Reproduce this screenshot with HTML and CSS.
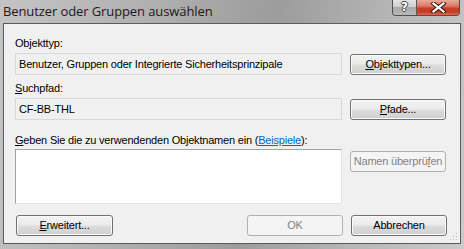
FILE: index.html
```html
<!DOCTYPE html>
<html lang="de">
<head>
<meta charset="utf-8">
<title>Benutzer oder Gruppen auswählen</title>
<link rel="stylesheet" href="styles.css">
</head>
<body>
<div class="window">
  <div class="titlebar">
    <span class="title">Benutzer oder Gruppen auswählen</span>
    <div class="caption-buttons">
      <div class="cap-btn help">?</div>
      <div class="cap-btn close">
        <svg width="17" height="11" viewBox="0 0 17 11">
          <path d="M3.5 1.5 L13.5 9.5 M13.5 1.5 L3.5 9.5" stroke="#3a1a14" stroke-width="4.2" stroke-linecap="square" fill="none"/>
          <path d="M3.5 1.5 L13.5 9.5 M13.5 1.5 L3.5 9.5" stroke="#ffffff" stroke-width="2.2" stroke-linecap="square" fill="none"/>
        </svg>
      </div>
    </div>
  </div>
  <div class="client">
    <div class="label l1">Objekttyp:</div>
    <div class="row r1">
      <div class="field">Benutzer, Gruppen oder Integrierte Sicherheitsprinzipale</div>
      <button class="btn"><u>O</u>bjekttypen...</button>
    </div>
    <div class="label l2"><u>S</u>uchpfad:</div>
    <div class="row r2">
      <div class="field">CF-BB-THL</div>
      <button class="btn"><u>P</u>fade...</button>
    </div>
    <div class="label l3"><u>G</u>eben Sie die zu verwendenden Objektnamen ein (<a class="link" href="#">Beispiele</a>):</div>
    <div class="row r3">
      <div class="names"></div>
      <button class="btn disabled">Namen überprü<u>f</u>en</button>
    </div>
    <div class="bottom">
      <button class="btn wide"><u>E</u>rweitert...</button>
      <div class="spacer"></div>
      <button class="btn disabled">OK</button>
      <button class="btn">Abbrechen</button>
    </div>
    <svg class="grip" width="9" height="9" viewBox="0 0 9 9">
      <rect x="7" y="1" width="1" height="1" fill="#b8b8b8"/>
      <rect x="4" y="4" width="1" height="1" fill="#b8b8b8"/>
      <rect x="7" y="4" width="1" height="1" fill="#b8b8b8"/>
      <rect x="1" y="7" width="1" height="1" fill="#b8b8b8"/>
      <rect x="4" y="7" width="1" height="1" fill="#b8b8b8"/>
      <rect x="7" y="7" width="1" height="1" fill="#b8b8b8"/>
    </svg>
  </div>
</div>
</body>
</html>
```

FILE: styles.css
```css
html, body {
  margin: 0;
  padding: 0;
  background: #ffffff;
}

.window {
  width: 464px;
  height: 249px;
  box-sizing: border-box;
  display: flex;
  flex-direction: column;
  background: linear-gradient(100deg, #c4c4c4 0%, #b0b0b0 30%, #9c9c9c 55%, #b8b8b8 80%, #cacaca 100%);
}

.titlebar {
  height: 23px;
  display: flex;
  align-items: flex-start;
  flex: none;
}

.title {
  flex: 1;
  padding-left: 3px;
  padding-top: 2px;
  font-family: "Open Sans", "Noto Sans", sans-serif;
  font-size: 13px;
  letter-spacing: -0.1px;
  line-height: 18px;
  color: #1a1a1a;
  white-space: nowrap;
}

.caption-buttons {
  display: flex;
  margin-right: 4px;
  height: 15px;
  border: 1px solid #4e4e4e;
  border-top: none;
  border-radius: 0 0 4px 4px;
  overflow: hidden;
}

.cap-btn {
  height: 15px;
  display: flex;
  align-items: center;
  justify-content: center;
}

.help {
  width: 23px;
  border-right: 1px solid #5a5a5a;
  background: linear-gradient(#e2e2e2 0%, #cfcfcf 45%, #a9a9a9 50%, #b9b9b9 100%);
  font-family: "DejaVu Sans", sans-serif;
  font-weight: bold;
  font-size: 12px;
  color: #ffffff;
  text-shadow: -1px 0 #444, 1px 0 #444, 0 -1px #444, 0 1px #444;
  line-height: 15px;
}

.close {
  width: 42px;
  background: linear-gradient(#e9a99a 0%, #dd7b66 40%, #c5412a 55%, #c63b24 80%, #dd6a4c 100%);
}

.client {
  position: relative;
  flex: none;
  height: 221px;
  margin: 0 3px 5px 3px;
  border: 1px solid #5c5c5c;
  box-sizing: border-box;
  background: #f0f0f0;
  padding: 0 13px 0 11px;
  font-family: "Liberation Sans", Arial, sans-serif;
  font-size: 11px;
  letter-spacing: -0.2px;
  color: #000;
}

.label {
  line-height: 13px;
  height: 13px;
  white-space: nowrap;
}

.l1 { margin-top: 13px; }
.l2 { margin-top: 7px; }
.l3 { margin-top: 14px; }

.row {
  display: flex;
  align-items: flex-start;
  gap: 8px;
}

.r1, .r2 { margin-top: 3px; }
.r3 { margin-top: 2px; }

.field {
  width: 327px;
  height: 22px;
  box-sizing: border-box;
  border: 1px solid #d8d8d8;
  background: #f0f0f0;
  padding-left: 3px;
  line-height: 20px;
  white-space: nowrap;
  overflow: hidden;
}

.names {
  width: 327px;
  height: 55px;
  box-sizing: border-box;
  background: #ffffff;
  border-top: 1px solid #a3a3a3;
  border-left: 1px solid #a3a3a3;
  border-right: 1px solid #e3e3e3;
  border-bottom: 1px solid #e3e3e3;
}

.r3 .btn { margin-top: 2px; }
.r1 .btn, .r2 .btn { margin-top: 1px; }

.btn {
  width: 96px;
  height: 21px;
  box-sizing: border-box;
  padding: 0;
  border: 1px solid #707070;
  border-radius: 3px;
  background: linear-gradient(#f2f2f2 0%, #ebebeb 49%, #dddddd 51%, #cfcfcf 100%);
  box-shadow: inset 0 0 0 1px #fbfbfb;
  font-family: "Liberation Sans", Arial, sans-serif;
  font-size: 11px;
  letter-spacing: -0.2px;
  color: #000;
  line-height: 19px;
  text-align: center;
  white-space: nowrap;
  flex: none;
}

.btn.disabled {
  border-color: #adb2b5;
  background: #f4f4f4;
  box-shadow: none;
  color: #838383;
}

.btn.wide { width: 97px; margin-left: 1px; }

.bottom {
  display: flex;
  gap: 8px;
  margin-top: 11px;
}

.spacer { flex: 1; }

.link {
  color: #0066cc;
  text-decoration: underline;
}

.grip {
  position: absolute;
  right: 2px;
  bottom: 2px;
}
```
